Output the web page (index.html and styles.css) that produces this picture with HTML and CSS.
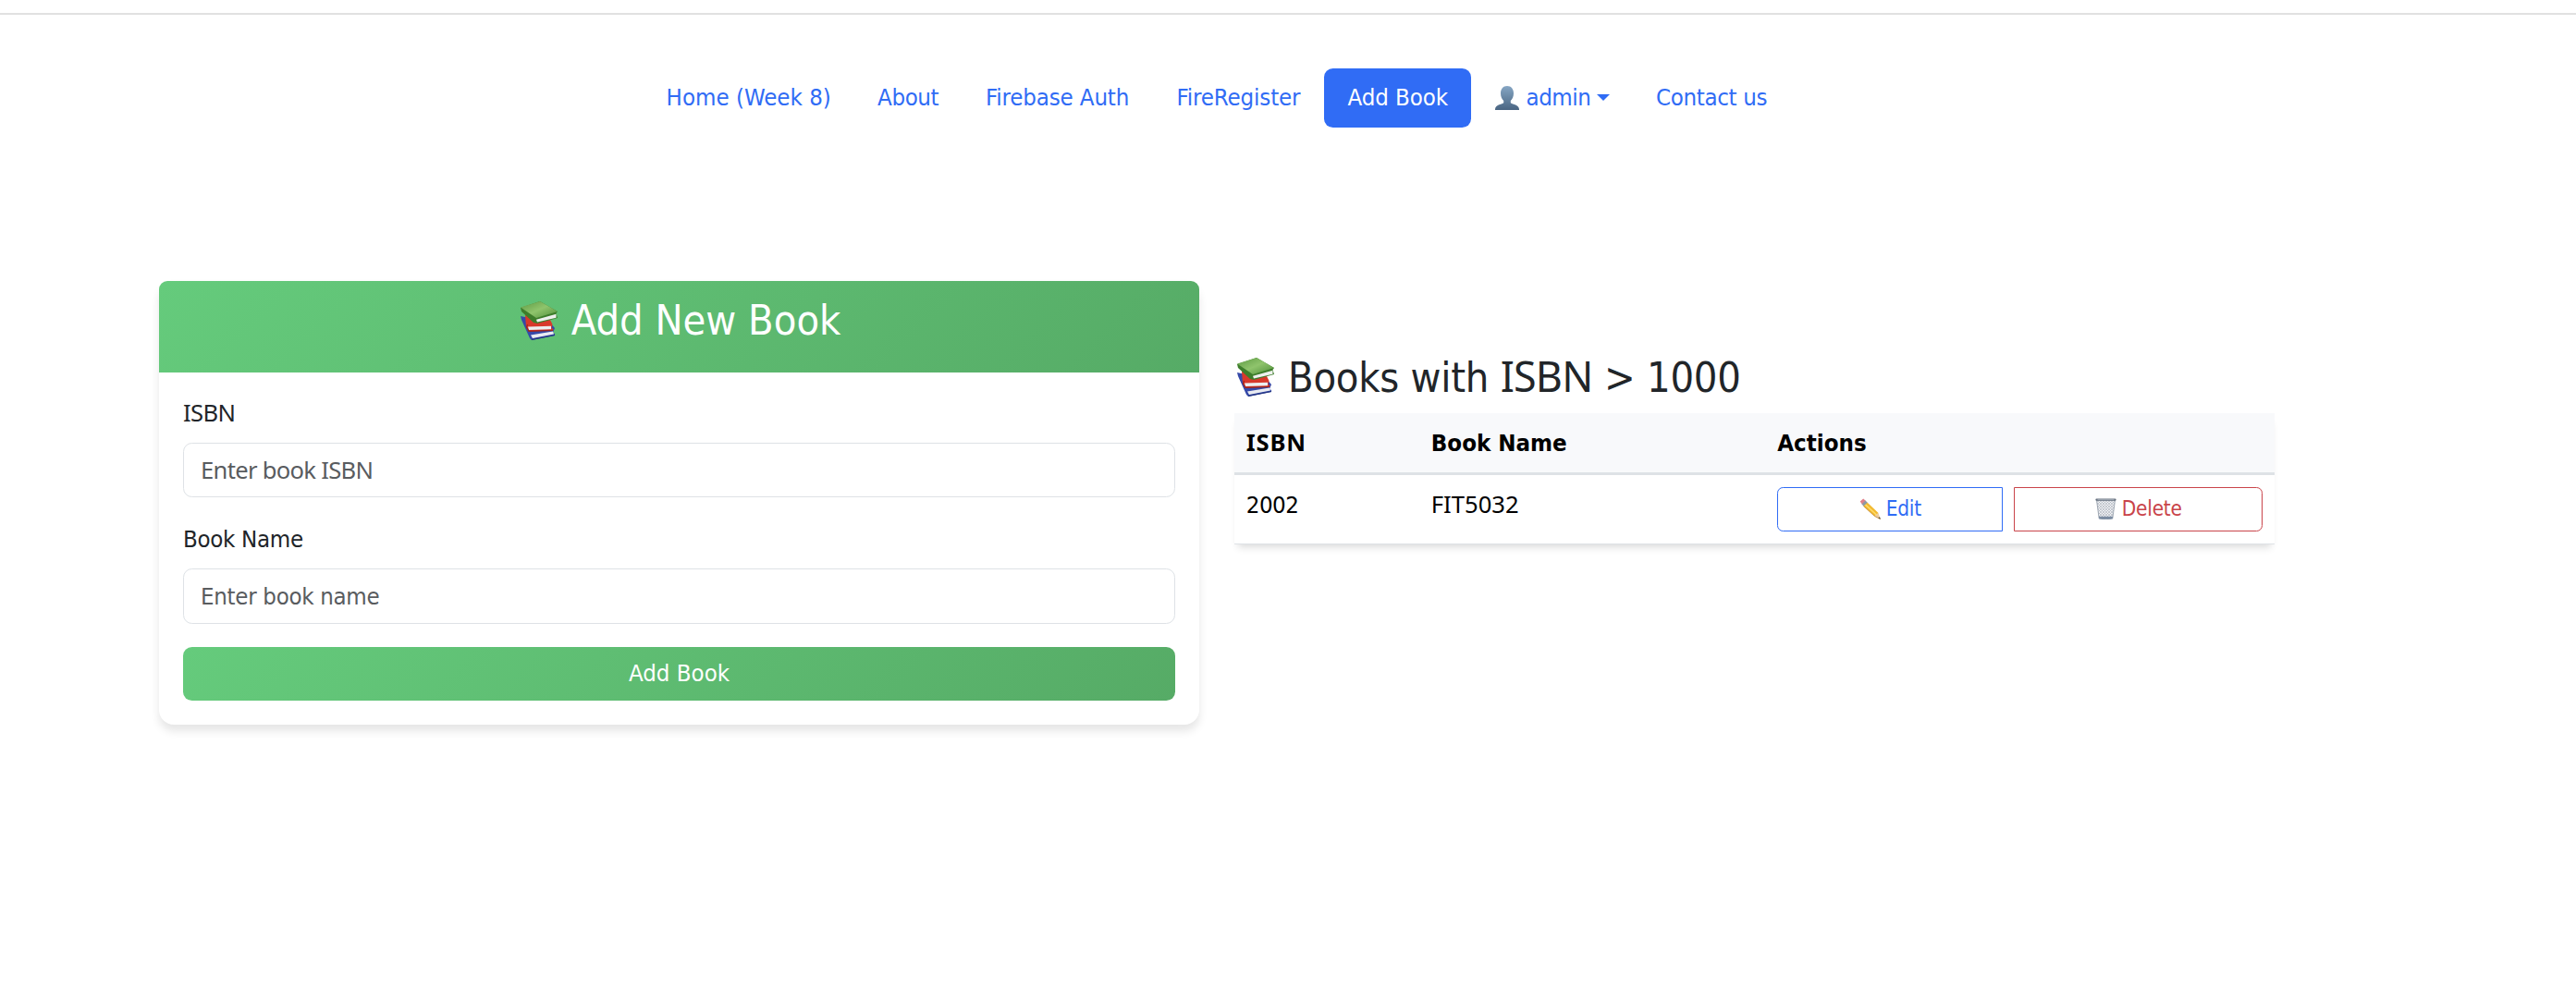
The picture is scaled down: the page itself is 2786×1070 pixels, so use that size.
FILE: index.html
```html
<!DOCTYPE html>
<html lang="en">
<head>
<meta charset="utf-8">
<title>Add Book</title>
<link rel="stylesheet" href="styles.css">
</head>
<body>
<svg width="0" height="0" class="defs" aria-hidden="true">
  <defs>
    <linearGradient id="cover" x1="0" y1="0" x2="1" y2="1"><stop offset="0" stop-color="#5d9a43"/><stop offset=".5" stop-color="#8fc46c"/><stop offset="1" stop-color="#4d8d38"/></linearGradient>
    <linearGradient id="bust" x1="0" y1="0" x2="0" y2="1"><stop offset="0" stop-color="#86a6c4"/><stop offset="1" stop-color="#4a6582"/></linearGradient>
    <pattern id="mesh" width="3" height="3" patternUnits="userSpaceOnUse"><rect width="3" height="3" fill="#eef0f3"/><path d="M0 0l3 3M3 0L0 3" stroke="#a9afb8" stroke-width=".6"/></pattern>
    <symbol id="books" viewBox="0 0 40 42">
      <path d="M0 16l1 4 9 20 2 2 25-5v-2l-2-1 2-5-5-6z" fill="#3549a8"/>
      <path d="M11 36.500l24-4 1 3-23 4.500z" fill="#e9ebf1"/>
      <path d="M12 41.300l25-4.800" stroke="#24357f" stroke-width="1.200"/>
      <path d="M5 15l1 13 3 4.500 26-1 .5-1.500-2-1 1-4-4-8z" fill="#d8382b"/>
      <path d="M8 27.500l25-.8v3.600L9 31z" fill="#eceef0"/>
      <path d="M7.500 25l-1 3 2.500 4.300 26-1" fill="none" stroke="#9c241d" stroke-width="1.200"/>
      <path d="M0 7L21 0l19 11-1.500 2 1.500 5-22 6-4-1L1 11z" fill="#3d7d2b"/>
      <path d="M0 6.500L21 0l19 11-23 7z" fill="url(#cover)"/>
      <path d="M17 19.800l21.500-6v4L18 22.500z" fill="#eef0ee"/>
    </symbol>
    <symbol id="person" viewBox="0 0 26 26">
      <path d="M13 0c4.500 0 7 3.400 7 8 0 3.500-1.400 6.300-3.200 8v2.300c1 1.500 8.700 1.700 9.200 6.700v1H0v-1c.5-5 8.200-5.200 9.200-6.700V16C7.400 14.300 6 11.500 6 8c0-4.600 2.500-8 7-8z" fill="url(#bust)"/>
    </symbol>
    <symbol id="pencil" viewBox="0 0 23 23">
      <path d="M.7 3.500L4.200.4 7 3 3 6.800z" fill="#e0808a"/>
      <path d="M2.500 6.400L6.500 2.600 9 5 5 9z" fill="#8d99a5"/>
      <path d="M4.500 8.600L8.700 4.700 20.500 16l-4 3.500z" fill="#f2b92f"/>
      <path d="M6.500 7l12 11" stroke="#ffdc6a" stroke-width="1.600"/>
      <path d="M20.500 16L22.700 22.600 16.500 19.500z" fill="#eccb9d"/>
      <path d="M22 20.300l.8 2.500-2.600-1.200z" fill="#333"/>
      <path d="M4.500 8.600l12 10.900 6 3" fill="none" stroke="#b77a1c" stroke-width=".7"/>
    </symbol>
    <symbol id="trash" viewBox="0 0 23 23">
      <path d="M1.500 2h20l-2.700 20q-7.300 1.500-14.600 0z" fill="url(#mesh)" stroke="#8b95a3" stroke-width=".8"/>
      <path d="M3.900 19.700h15.200l-.4 2.500q-7.200 1.200-14.400 0z" fill="#7b8ca2"/>
      <rect x=".4" y=".4" width="22.200" height="2.400" rx="1" fill="#66717f"/>
      <path d="M2.500 1.600h18" stroke="#b5bdc7" stroke-width=".7"/>
    </symbol>
  </defs>
</svg>
<hr class="rule">
<nav class="nav">
  <a class="link home">Home (Week 8)</a>
  <a class="link about">About</a>
  <a class="link auth">Firebase Auth</a>
  <a class="link register">FireRegister</a>
  <a class="link add active">Add Book</a>
  <a class="link user"><svg class="person"><use href="#person"/></svg><span>admin</span><i class="caret"></i></a>
  <a class="link contact">Contact us</a>
</nav>
<main class="row">
  <section class="card">
    <div class="card-header"><h3 class="title"><svg class="books"><use href="#books"/></svg><span>Add New Book</span></h3></div>
    <form class="card-body">
      <label class="label isbn" for="isbn">ISBN</label>
      <input class="input input-isbn" id="isbn" placeholder="Enter book ISBN">
      <label class="label" for="name">Book Name</label>
      <input class="input" id="name" placeholder="Enter book name">
      <button class="submit" type="button">Add Book</button>
    </form>
  </section>
  <section class="list">
    <h3 class="title"><svg class="books"><use href="#books"/></svg><span>Books with <span class="isbn">ISBN</span> &gt; 1000</span></h3>
    <table class="table">
      <thead><tr><th class="col-isbn"><span class="isbn">ISBN</span></th><th class="col-name">Book Name</th><th>Actions</th></tr></thead>
      <tbody><tr>
        <td class="number">2002</td>
        <td><span class="isbn">FIT5032</span></td>
        <td><div class="actions">
          <button class="btn edit" type="button"><svg class="glyph"><use href="#pencil"/></svg>Edit</button>
          <button class="btn delete" type="button"><svg class="glyph"><use href="#trash"/></svg>Delete</button>
        </div></td>
      </tr></tbody>
    </table>
  </section>
</main>
</body>
</html>
```
FILE: styles.css
```css
html { font-size: 25.6px; }
* { box-sizing: border-box; }
body {
  margin: 0;
  min-height: 1070px;
  background: #fff;
  color: #212529;
  font: 1rem/1.5 "DejaVu Sans Condensed", "DejaVu Sans", sans-serif;
  font-stretch: condensed;
}
.defs { display: block; height: 0; }
.rule { margin: 14px 0 0; border: 0; height: 2px; background: #e1e1e1; }

.nav { display: flex; margin: 58px 0 0 695px; }
.link {
  display: flex;
  align-items: center;
  flex: none;
  height: 64px;
  padding: 0 0 1px 1rem;
  border-radius: 9.6px;
  color: #306cf5;
  white-space: nowrap;
}
.home { width: 228.500px; }
.about { width: 117px; letter-spacing: -.4px; }
.auth { width: 206.500px; letter-spacing: -.15px; }
.register { width: 185px; letter-spacing: -.15px; }
.add { width: 159px; letter-spacing: -.1px; }
.user { width: 174.500px; letter-spacing: -.5px; }
.contact { width: 171px; letter-spacing: -.35px; }
.active { background: #306cf5; color: #fff; }
.person { flex: none; width: 26px; height: 26px; margin: 0 8px 0 0; }
.caret { margin: 0 0 0 7px; border: 7px solid transparent; border-top-color: currentColor; border-bottom: 0; }

.row { display: flex; align-items: flex-start; gap: 38px; margin: 166px 326px 0 172px; }
.isbn { font-family: "Noto Sans", sans-serif; font-stretch: normal; letter-spacing: -.5px; }

.card {
  width: 1125px;
  height: 480px;
  border-radius: 16px;
  background: #fff;
  box-shadow: 0 6.4px 9.6px rgba(0, 0, 0, .1);
}
.card-header {
  height: 99px;
  padding-top: 16px;
  border-radius: 9px 9px 0 0;
  background: linear-gradient(135deg, #65cb7c, #56ab66);
  color: #fff;
}
.card-header .title { justify-content: center; padding-left: 3px; }
.title { display: flex; align-items: center; margin: 0; font-size: 44.8px; font-weight: 400; line-height: 1.2; white-space: nowrap; }
.books { flex: none; width: 40px; height: 42px; margin-right: 15px; }
.card-body { display: flex; flex-direction: column; margin: 0; padding: 24.600px 26px 0; }
.label { height: 38.400px; margin-bottom: 12.800px; line-height: 38.400px; letter-spacing: -.3px; }
.label.isbn { letter-spacing: -.6px; }
.input {
  height: 59.600px;
  margin: 0 0 1rem;
  padding: 0 18px;
  border: 1px solid #dee2e6;
  border-radius: 9.6px;
  background: #fff;
  font: inherit;
  letter-spacing: -.3px;
  outline: 0;
}
.input::placeholder { color: #595c5f; opacity: 1; }
.input-isbn { font-family: "Noto Sans", sans-serif; font-stretch: normal; letter-spacing: -.7px; }
.submit {
  height: 57.600px;
  padding: 0 0 1px;
  border: 0;
  border-radius: 9.6px;
  background: linear-gradient(135deg, #65cb7c, #56ab66);
  color: #fff;
  font: inherit;
}

.list { width: 1125px; padding-top: 77px; }
.list .title { height: 54px; margin-bottom: 12px; padding-left: 3px; }
.list .title > span { letter-spacing: -.25px; }
.list .isbn { letter-spacing: 0; }
.list .title .isbn { letter-spacing: -.8px; }
.list th .isbn { letter-spacing: .8px; }
.table {
  width: 100%;
  table-layout: fixed;
  border-spacing: 0;
  color: #000;
  box-shadow: 0 7px 8px -4px rgba(0, 0, 0, .15);
}
.col-isbn { width: 200px; }
.col-name { width: 374.500px; }
th, td { padding: 12.800px; text-align: left; vertical-align: top; line-height: 38.400px; background: #fff; }
th { height: 67px; padding-bottom: 12.600px; border-bottom: 3px solid #dee2e6; background: #f8f9fb; }
td { height: 75px; padding-bottom: 12px; border-bottom: 1px solid #dee2e6; }
td > .isbn { display: block; height: 38.400px; letter-spacing: -.2px; }
.number { letter-spacing: -.5px; }
.actions { display: flex; gap: 12px; }
.btn {
  display: flex;
  align-items: center;
  justify-content: center;
  height: 48px;
  padding: 0 0 1px;
  border: 1px solid;
  background: #fff;
  font: inherit;
  font-size: 22.4px;
}
.edit { width: 244px; border-radius: 6.400px 0 0 6.400px; color: #306cf5; }
.delete { width: 269px; border-radius: 0 6.400px 6.400px 0; color: #c9444a; }
.edit, .delete { letter-spacing: -.2px; }
.glyph { flex: none; width: 23px; height: 23px; margin-right: 6px; }
```
